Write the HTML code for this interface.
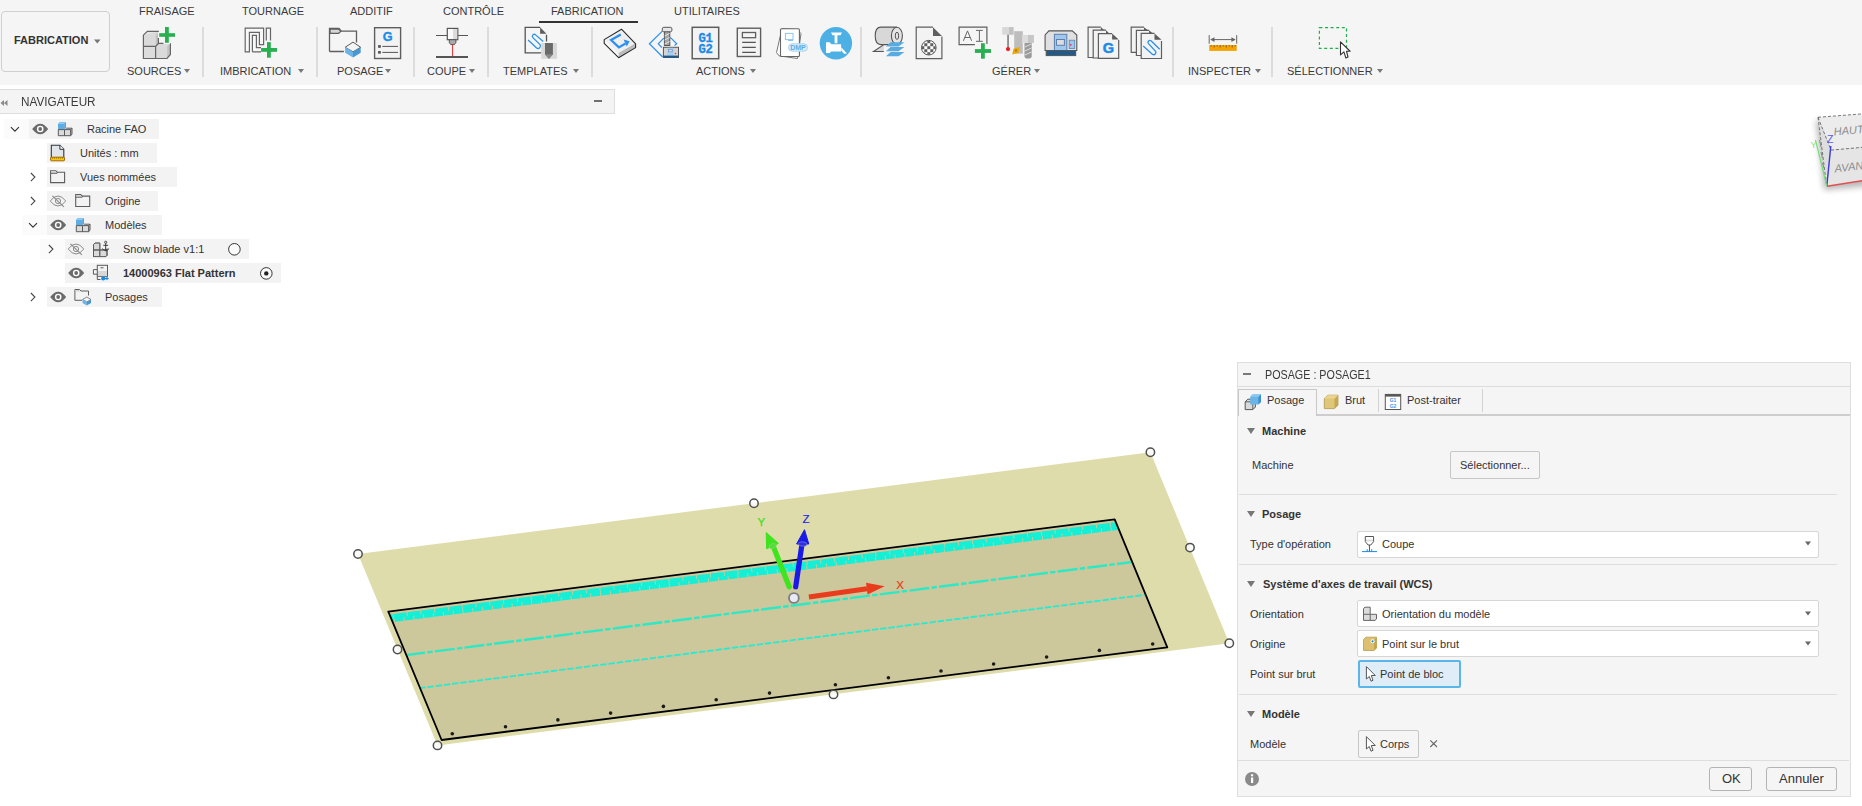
<!DOCTYPE html>
<html><head><meta charset="utf-8">
<style>
*{box-sizing:border-box;margin:0;padding:0}
html,body{width:1862px;height:806px;overflow:hidden;background:#fff;font-family:"Liberation Sans",sans-serif;color:#3c3c3c}
.abs{position:absolute}
#tb{position:absolute;left:0;top:0;width:1862px;height:85px;background:#f5f5f5}
.tab{position:absolute;top:5px;font-size:11px;line-height:13px;color:#3a3a3a;white-space:nowrap}
.grp{position:absolute;top:65px;font-size:11px;line-height:13px;color:#3a3a3a;white-space:nowrap}
.sep{position:absolute;top:27px;width:2px;height:50px;background:#dcdcdc}
.arr{display:inline-block;width:0;height:0;border-left:3px solid transparent;border-right:3px solid transparent;border-top:4px solid #777;vertical-align:2px}
.ic{position:absolute}
#nav{position:absolute;left:0;top:89px;width:615px;height:25px;background:#f4f4f4;border:1px solid #dedede;border-left:none}
.row{position:absolute;height:20px;background:#f3f3f3}
.rt{position:absolute;font-size:11px;line-height:13px;color:#333;white-space:nowrap}
#dlg{position:absolute;left:1237px;top:362px;width:614px;height:435px;background:#f5f5f5}
#dlgb{position:absolute;left:0;top:0;width:614px;height:435px;border:1px solid #dedede}
.lbl{position:absolute;font-size:11px;line-height:13px;color:#333;white-space:nowrap}
.hdr{position:absolute;font-size:11px;line-height:13px;font-weight:bold;color:#333;white-space:nowrap}
.tri{position:absolute;width:0;height:0;border-left:4.5px solid transparent;border-right:4.5px solid transparent;border-top:6px solid #777}
.hl{position:absolute;height:1px;background:#dedede}
.sel{position:absolute;background:#fff;border:1px solid #d6d6d6;border-radius:2px}
.btn{position:absolute;border:1px solid #c6c6c6;border-radius:2px;background:#f5f5f5}
</style></head><body>

<!-- TOOLBAR -->
<div id="tb">
  <div class="abs" style="left:1px;top:11px;width:109px;height:61px;border:1px solid #cfcfcf;border-radius:4px"></div>
  <div class="abs" style="left:14px;top:34px;font-size:11px;line-height:13px;font-weight:bold;color:#333">FABRICATION</div>
  
  <div class="tab" style="left:139px">FRAISAGE</div>
  <div class="tab" style="left:242px">TOURNAGE</div>
  <div class="tab" style="left:350px">ADDITIF</div>
  <div class="tab" style="left:443px">CONTRÔLE</div>
  <div class="tab" style="left:551px">FABRICATION</div>
  <div class="abs" style="left:539px;top:21px;width:99px;height:2px;background:#333"></div>
  <div class="tab" style="left:674px">UTILITAIRES</div>

  <div class="grp" style="left:127px">SOURCES<span class="arr" style="margin-left:3px"></span></div>
  <div class="sep" style="left:202px"></div>
  <div class="grp" style="left:220px">IMBRICATION <span class="arr" style="margin-left:4px"></span></div>
  <div class="sep" style="left:316px"></div>
  <div class="grp" style="left:337px">POSAGE<span class="arr" style="margin-left:2px"></span></div>
  <div class="sep" style="left:413px"></div>
  <div class="grp" style="left:427px">COUPE<span class="arr" style="margin-left:3px"></span></div>
  <div class="sep" style="left:487px"></div>
  <div class="grp" style="left:503px">TEMPLATES <span class="arr" style="margin-left:2px"></span></div>
  <div class="sep" style="left:591px"></div>
  <div class="grp" style="left:696px">ACTIONS <span class="arr" style="margin-left:2px"></span></div>
  <div class="sep" style="left:860px"></div>
  <div class="grp" style="left:992px">GÉRER<span class="arr" style="margin-left:3px"></span></div>
  <div class="sep" style="left:1172px"></div>
  <div class="grp" style="left:1188px">INSPECTER<span class="arr" style="margin-left:4px"></span></div>
  <div class="sep" style="left:1271px"></div>
  <div class="grp" style="left:1287px">SÉLECTIONNER<span class="arr" style="margin-left:4px"></span></div>
  <svg class="abs" style="left:0;top:0" width="1862" height="85" viewBox="0 0 1862 85">
 <!-- Fabrication dropdown arrow -->
 <path d="M94,39.5 H100.5 L97.25,43.5 Z" fill="#777"/>
 <!-- SOURCES -->
 <path d="M143.4,35.2 L147.3,31.3 H158.8 V43.4 L155.6,46.4 H143.4 Z" fill="#dadada"/>
 <path d="M155.6,46.4 L158.4,43.4 H170.4 V54.5 L167,58.5 H155.6 Z" fill="#dadada"/>
 <path d="M143.4,46.4 H155.6 V58.5 H143.4 Z" fill="#dcdcdc"/>
 <path d="M155.8,35 L158.6,32 V43.4 L155.8,46.4 Z" fill="#c2c2c2"/>
 <path d="M167.2,46.5 L170.2,43.5 V54.5 L167.2,58.3 Z" fill="#c2c2c2"/>
 <path d="M143.4,35.2 L147.3,31.3 H158.8" fill="#e6e6e6"/>
 <g stroke="#666" stroke-width="1.2" fill="none">
  <path d="M158.8,31.3 H147.3 L143.4,35.2 V58.5 H167 L170.4,54.5 V43.2"/>
  <path d="M158.4,37.5 V43.4 L155.6,46.4 H143.4 M155.6,46.4 V58.5 M158.4,43.4 H163.5"/>
 </g>
 <path d="M159.2,33.2 H175 V36.8 H159.2 Z M165,27 H168.8 V42.8 H165 Z" fill="none" stroke="#f4f4f4" stroke-width="2.4"/>
 <rect x="159.2" y="33.2" width="15.8" height="3.6" fill="#27b04f"/>
 <rect x="165" y="27" width="3.8" height="15.8" fill="#27b04f"/>
 <!-- IMBRICATION -->
 <g stroke="#666" stroke-width="1.2" fill="#f8f8f8">
  <path d="M245.2,51.8 V28.2 H263.6 V44.6 H259.4 V32.4 H249.4 V51.8 Z"/>
  <path d="M252.4,51.8 V35.4 H256.4 V47.6 H261 M261,51.8 H252.4"/>
  <path d="M266.3,40.6 V28.2 H270.5 V40.6"/>
 </g>
 <rect x="261.1" y="48" width="15.9" height="3.8" fill="#27b04f"/>
 <rect x="267" y="42.1" width="3.8" height="15.6" fill="#27b04f"/>
 <!-- POSAGE folder -->
 <path d="M329.5,51.5 V28.5 H338.9 L341.4,31.2 H356.5 V42.6 M343.9,51.5 H329.5" stroke="#5e5e5e" stroke-width="1.3" fill="none"/>
 <path d="M330.1,29.1 H338.6 L340.9,31.2 L338.6,33.4 H330.1 Z" fill="#d6d6d6" stroke="#5e5e5e" stroke-width="1.2"/>
 <path d="M345.1,47.3 L353,42.1 L360.7,47.3 L353,51.8 Z" fill="#f4f4f4" stroke="#5a5a5a" stroke-width="1"/>
 <path d="M345.1,47.3 L353,51.8 V57.5 L345.1,52.8 Z" fill="#6ab4e8"/>
 <path d="M360.7,47.3 L353,51.8 V57.5 L360.7,52.8 Z" fill="#4a98d2"/>
 <!-- G doc -->
 <rect x="374.6" y="27.7" width="26" height="30.8" fill="#f3f3f3" stroke="#5e5e5e" stroke-width="1.4"/>
 <text x="387.6" y="40.9" text-anchor="middle" font-family="Liberation Sans" font-weight="bold" font-size="12.6" fill="#1c8ae6" stroke="#1c8ae6" stroke-width=".35">G</text>
 <rect x="378.1" y="45.1" width="2.7" height="2.7" fill="#555"/>
 <rect x="378.1" y="51" width="2.7" height="2.7" fill="#555"/>
 <path d="M382.3,46.4 H398 M382.3,52.4 H398" stroke="#555" stroke-width="1"/>
 <!-- COUPE -->
 <path d="M436,35.5 H447.3 M457.8,35.5 H468" stroke="#555" stroke-width="1"/>
 <rect x="447.3" y="28.4" width="10.5" height="11.3" fill="#fafafa" stroke="#555" stroke-width="1.2"/>
 <rect x="453" y="29" width="4.2" height="10.1" fill="#dcdcdc"/>
 <path d="M449.3,39.7 V42.5 L450.8,44.6 H454.4 L455.9,42.5 V39.7 Z" fill="#aaa" stroke="#555" stroke-width="1"/>
 <path d="M452.6,44.6 V56.2" stroke="#e03030" stroke-width="1"/>
 <rect x="436" y="56" width="32" height="2" fill="#555"/>
 <!-- TEMPLATES -->
 <path d="M540.1,27.3 H525.2 V52.8 H541.3 M546.5,34.8 V41.5" stroke="#555" stroke-width="1.3" fill="none"/>
 <path d="M540.1,27.3 L546.5,33.7 H540.1 Z" fill="#5e5e5e"/>
 <path d="M528.1,40 L536.6,47.9 A2.4,2.4 0 0 0 540,44.6 L532.9,37.6 A1.9,1.9 0 0 1 535.6,34.9 L543.2,41.6" stroke="#2a90e8" stroke-width="1.3" fill="none"/>
 <rect x="541.3" y="43" width="15.7" height="15.8" fill="#d8d8d8"/>
 <path d="M545,43 H552.9 V54.3 L548.95,58.8 L545,54.3 Z" fill="#6a6a6a"/>
 <path d="M545,54.3 H552.9 L548.95,58.8 Z" fill="#888"/>
 <!-- ACTIONS 1 slab -->
 <path d="M604.2,39.6 L618.6,53.5 V57.7 L604.2,43.3 Z" fill="#fafafa"/>
 <path d="M618.6,53.5 L635.6,43.8 V47.6 L618.6,57.7 Z" fill="#bdbdbd"/>
 <path d="M604.2,39.6 L621.5,29.2 L635.6,43.8 L618.6,53.5 Z" fill="#efefef"/>
 <path d="M618.6,53.5 L635.6,43.8" stroke="#9a9a9a" stroke-width=".6"/>
 <path d="M604.2,39.6 L621.5,29.2 L635.6,43.8 V47.6 L618.6,57.7 L604.2,43.3 Z" fill="none" stroke="#2a2a2a" stroke-width="1.1" stroke-linejoin="round"/>
 <path d="M620.8,34.4 L611.1,40 L618.9,47.4 L625.5,43.6" fill="none" stroke="#2d8ff0" stroke-width="2.3"/>
 <path d="M623.6,39.6 L629.6,41.2 L626.8,46.4 Z" fill="#2d8ff0"/>
 <!-- ACTIONS 2 -->
 <path d="M662.3,31.1 L649.4,43.8 L662.7,57 M663.7,38.2 L658.3,43.8 L661.8,47.5 M670.3,37.4 L676.7,43.8 L674.5,45.5" fill="none" stroke="#2d8ff0" stroke-width="1.2"/>
 <rect x="664.4" y="31.5" width="5.4" height="14" fill="#a6a6a6" stroke="#555" stroke-width="1"/>
 <path d="M664.6,36 L669.6,33.5 M664.6,40 L669.6,37.5 M664.6,44 L669.6,41.5" stroke="#e0e0e0" stroke-width="1"/>
 <rect x="662.3" y="27.3" width="9.6" height="4.5" rx="1.5" fill="#e6e6e6" stroke="#555" stroke-width="1"/>
 <rect x="663.4" y="47.3" width="15.1" height="10.2" fill="#d4d4d4" stroke="#555" stroke-width="1"/>
 <rect x="667.5" y="47.8" width="6.1" height="8.4" fill="#a8cff0"/>
 <rect x="668.6" y="49.5" width="3.6" height="2.3" fill="#ddd" stroke="#6a8fc0" stroke-width=".6"/>
 <rect x="663.4" y="55.6" width="15.1" height="1.9" fill="#1b5a8a"/>
 <circle cx="675.5" cy="53.5" r=".8" fill="#e0306a"/>
 <!-- G1G2 -->
 <rect x="692.2" y="27.3" width="26.5" height="31.4" fill="#f3f3f3" stroke="#5e5e5e" stroke-width="1.5"/>
 <text x="705.6" y="41.9" text-anchor="middle" font-family="Liberation Mono" font-weight="bold" font-size="12.2" letter-spacing="-0.2" fill="#1c8ae6" stroke="#1c8ae6" stroke-width=".3">G1</text>
 <text x="705.6" y="52.8" text-anchor="middle" font-family="Liberation Mono" font-weight="bold" font-size="12.2" letter-spacing="-0.2" fill="#1c8ae6" stroke="#1c8ae6" stroke-width=".3">G2</text>
 <!-- doc lines -->
 <rect x="737.3" y="28.2" width="23.3" height="28.3" fill="#f3f3f3" stroke="#5e5e5e" stroke-width="1.4"/>
 <rect x="742.4" y="32.5" width="13.2" height="5.2" fill="#f3f3f3" stroke="#5e5e5e" stroke-width="1.3"/>
 <path d="M742.2,42.4 H755.8 M742.2,47.4 H755.8 M742.2,52.4 H755.8" stroke="#555" stroke-width="1.1"/>
 <!-- DMP -->
 <path d="M782,28.5 L797,29.5 L801,33.5 L797.5,58.5 L779,55.8 L776.5,52.5 Z" fill="#fff" stroke="#777" stroke-width="1"/>
 <rect x="780.5" y="28.7" width="18.9" height="27.8" rx="1" fill="#fff" stroke="#666" stroke-width="1.1"/>
 <rect x="785.4" y="33.4" width="7.6" height="6.2" fill="none" stroke="#8cc4f0" stroke-width="1"/>
 <path d="M788,40.5 H793" stroke="#8cc4f0" stroke-width="1"/>
 <rect x="788.5" y="43.8" width="19" height="7.4" rx="3.7" fill="#dcecf8" stroke="#a8d4f4" stroke-width="1"/>
 <text x="798" y="50.2" text-anchor="middle" font-family="Liberation Sans" font-weight="bold" font-size="7" fill="#5aaae6">DMP</text>
 <!-- blue circle -->
 <circle cx="835.9" cy="43.2" r="16.2" fill="#4db0e4"/>
 <path d="M831,32.5 H842 L840.5,35.3 H837.4 V43.2 H834.6 V35.3 H832.5 Z" fill="#fff"/>
 <path d="M826,42.2 H829.5 L831.5,44.3 H841.1 V51.4 H831.5 L829.5,53 H826 Z" fill="#fff"/>
 <path d="M841.3,47.3 L847,53.5 L844,53.8 L841.3,50.5 Z" fill="#fff"/>
 <!-- GERER roll -->
 <path d="M896.9,27.1 H881 Q875.2,27.1 875.2,35.8 Q875.2,44.6 881,44.6 H896.9" fill="#d8d8d8" stroke="#555" stroke-width="1.1"/>
 <ellipse cx="896.9" cy="35.8" rx="5.5" ry="8.6" fill="#e4e4e4" stroke="#555" stroke-width="1.1"/>
 <ellipse cx="897" cy="35.8" rx="1.7" ry="3.6" fill="none" stroke="#555" stroke-width="1"/>
 <path d="M883.8,44.6 L873.5,51.5 H883.8" fill="#d8d8d8" stroke="#555" stroke-width="1.1"/>
 <path d="M885.9,46.4 L890.6,42.2 H904.4 L898.6,46.4 Z M885.9,51.3 L890.6,47.1 H904.4 L898.6,51.3 Z M885.9,56.3 L890.6,52.1 H904.4 L898.6,56.3 Z" fill="#5aaae0"/>
 <!-- doc checker -->
 <path d="M933,27.2 H916.2 V58.6 H941.9 V36.5" fill="#f3f3f3" stroke="#5e5e5e" stroke-width="1.2"/>
 <path d="M933,27.3 L941.9,36 H933 Z" fill="#5e5e5e"/>
 <defs><clipPath id="chk"><circle cx="928.8" cy="47.7" r="7"/></clipPath></defs>
 <circle cx="928.8" cy="47.7" r="7.3" fill="#fff"/>
 <g fill="#606060" clip-path="url(#chk)"><rect x="921.3" y="40.2" width="3" height="3"/><rect x="921.3" y="46.2" width="3" height="3"/><rect x="921.3" y="52.2" width="3" height="3"/><rect x="924.3" y="43.2" width="3" height="3"/><rect x="924.3" y="49.2" width="3" height="3"/><rect x="927.3" y="40.2" width="3" height="3"/><rect x="927.3" y="46.2" width="3" height="3"/><rect x="927.3" y="52.2" width="3" height="3"/><rect x="930.3" y="43.2" width="3" height="3"/><rect x="930.3" y="49.2" width="3" height="3"/><rect x="933.3" y="40.2" width="3" height="3"/><rect x="933.3" y="46.2" width="3" height="3"/><rect x="933.3" y="52.2" width="3" height="3"/></g>
 <circle cx="928.8" cy="47.7" r="7.3" fill="none" stroke="#555" stroke-width="1"/>
 <!-- A I + -->
 <path d="M974.9,44.6 H959.1 V27.1 H986.9 V44" fill="none" stroke="#5e5e5e" stroke-width="1.2"/>
 <path d="M963.4,40.8 L967.5,30.9 L971.6,40.8 M964.8,37.5 H970.2" fill="none" stroke="#666" stroke-width="1"/>
 <path d="M976,30.4 H982.8 M976,41.3 H982.8 M979.4,30.4 V41.3" fill="none" stroke="#666" stroke-width="1"/>
 <rect x="974.9" y="49.1" width="16.1" height="3.8" fill="#27b04f"/>
 <rect x="981" y="43.2" width="3.8" height="15.5" fill="#27b04f"/>
 <!-- tools -->
 <rect x="1002.2" y="27.1" width="11.3" height="7.6" fill="#d8d8d8"/>
 <rect x="1009" y="27.1" width="4.5" height="7.6" fill="#c2c2c2"/>
 <rect x="1007.3" y="34.7" width="1.5" height="13" fill="#777"/>
 <circle cx="1008" cy="49.1" r="2.1" fill="#ee1c24"/>
 <rect x="1014.2" y="31.2" width="8.6" height="22.4" fill="#bdbdbd"/>
 <path d="M1012.2,54.6 L1013.5,48.7 L1019.7,47 L1018.7,52.9 Z" fill="#f0a800"/>
 <rect x="1015" y="49.5" width="2" height="2" fill="#9a7a30"/>
 <rect x="1022.1" y="35" width="11.7" height="7.9" fill="#dcdcdc"/>
 <rect x="1028" y="35" width="5.8" height="7.9" fill="#c6c6c6"/>
 <path d="M1024.5,42.9 H1031.7 V57 L1030,58.4 H1026 L1024.5,57 Z" fill="#9a9a9a"/>
 <path d="M1024.8,47 L1031.4,44 M1024.8,51 L1031.4,48 M1024.8,55 L1031.4,52" stroke="#e0e0e0" stroke-width="1"/>
 <!-- machine -->
 <path d="M1045.1,50.5 V35 L1048.9,30.9 H1072.3 L1076.8,35 V50.5 Z" fill="#e0e0e0" stroke="#555" stroke-width="1.1"/>
 <rect x="1054.4" y="34.3" width="12.4" height="16.2" fill="#a0c8ec" stroke="#5a80b0" stroke-width="1"/>
 <rect x="1056.5" y="39.5" width="7.9" height="5.8" fill="#dcdcdc" stroke="#5a80b0" stroke-width="1"/>
 <rect x="1069.2" y="40.2" width="5.5" height="8.2" fill="#a0c8ec" stroke="#5a80b0" stroke-width=".8"/>
 <circle cx="1070.8" cy="44.8" r=".9" fill="#e0306a"/>
 <rect x="1046.2" y="50.5" width="29.5" height="5.1" fill="#1e5a8c" stroke="#555" stroke-width="1"/>
 <!-- docs G -->
 <path d="M1095,57.5 H1088.1 V27.1 H1100.8" fill="#f3f3f3" stroke="#5e5e5e" stroke-width="1.2"/>
 <path d="M1100.8,27.1 L1104.5,30.5 H1100.8 Z" fill="#5e5e5e"/>
 <path d="M1098.4,58 H1093.2 V30.2 H1106" fill="#f3f3f3" stroke="#5e5e5e" stroke-width="1.2"/>
 <path d="M1106,30.2 L1109.5,33.6 H1106 Z" fill="#5e5e5e"/>
 <path d="M1112.1,33.6 H1098.4 V58.4 H1118.7 V40" fill="#f3f3f3" stroke="#5e5e5e" stroke-width="1.2"/>
 <path d="M1112.1,33.6 L1118.7,39.5 H1112.1 Z" fill="#5e5e5e"/>
 <text x="1108.4" y="52.9" text-anchor="middle" font-family="Liberation Sans" font-weight="bold" font-size="14.5" fill="#1c8ae6" stroke="#1c8ae6" stroke-width=".5">G</text>
 <!-- docs clip -->
 <path d="M1136.4,52.3 H1131.2 V27.2 H1144" fill="#f3f3f3" stroke="#5e5e5e" stroke-width="1.2"/>
 <path d="M1144,27.2 L1148,30.3 H1144 Z" fill="#5e5e5e"/>
 <path d="M1141.2,55.5 H1136.4 V30.3 H1149" fill="#f3f3f3" stroke="#5e5e5e" stroke-width="1.2"/>
 <path d="M1149,30.3 L1153,33.4 H1149 Z" fill="#5e5e5e"/>
 <path d="M1154.5,33.4 H1141.2 V58.5 H1161.5 V41" fill="#f3f3f3" stroke="#5e5e5e" stroke-width="1.2"/>
 <path d="M1154.5,33.4 L1161.5,39.8 H1154.5 Z" fill="#5e5e5e"/>
 <path d="M1143.2,46.1 L1152.6,54.4 A2.2,2.2 0 0 0 1155.6,51.4 L1148.3,43.4 A1.9,1.9 0 0 1 1151,40.8 L1159.7,49.2" stroke="#2a90e8" stroke-width="1.3" fill="none"/>
 <!-- ruler -->
 <path d="M1209.2,35.1 V43.7 M1236.7,35.1 V43.7 M1211,39.6 H1235" stroke="#666" stroke-width="1"/>
 <path d="M1210.2,39.6 L1214.5,37.2 V42 Z M1235.7,39.6 L1231.4,37.2 V42 Z" fill="#666"/>
 <rect x="1209.2" y="45.1" width="27.5" height="5.8" fill="#f5a300"/>
 <path d="M1211.2,45.1 V46.5 M1214.2,45.1 V47.5 M1217.2,45.1 V46.5 M1220.2,45.1 V47.5 M1223.2,45.1 V46.5 M1226.2,45.1 V47.5 M1229.2,45.1 V46.5 M1232.2,45.1 V47.5 M1235.2,45.1 V46.5" stroke="#6a5020" stroke-width=".8"/>
 <!-- select -->
 <rect x="1319.4" y="27.6" width="27.1" height="20.8" fill="none" stroke="#1db04a" stroke-width="1.2" stroke-dasharray="3 2.6"/>
 <path d="M1340.5,41.9 V54.9 L1343.9,51.8 L1345.9,58 L1348,57 L1346.5,51.25 H1350.1 Z" fill="#fff" stroke="#333" stroke-width="1.1" stroke-linejoin="round"/>
</svg>

</div>

<!-- NAVIGATOR -->
<div id="nav">
  <div class="abs" style="left:21px;top:5px;font-size:12.3px;line-height:14px;color:#3a3a3a;transform:scaleX(0.955);transform-origin:0 0">NAVIGATEUR</div>
  <svg class="abs" style="left:0;top:9px" width="10" height="8"><path d="M0.5,4 L4,1 V7 Z M4,4 L7.5,1 V7 Z" fill="#8a8a8a"/></svg>
  <div class="abs" style="left:594px;top:10px;width:8px;height:2px;background:#707070"></div>
</div>
<!--TREE-->
<div class="abs" style="left:4px;top:119px;width:25px;height:20px;background:#fbfbfb"></div>
<div class="row" style="left:29px;top:119px;width:130px"></div>
<div class="row" style="left:47px;top:143px;width:110px"></div>
<div class="row" style="left:47px;top:167px;width:130px"></div>
<div class="row" style="left:47px;top:191px;width:111px"></div>
<div class="abs" style="left:22px;top:215px;width:25px;height:20px;background:#fbfbfb"></div>
<div class="row" style="left:47px;top:215px;width:115px"></div>
<div class="abs" style="left:40px;top:239px;width:25px;height:20px;background:#fbfbfb"></div>
<div class="row" style="left:65px;top:239px;width:184px"></div>
<div class="row" style="left:65px;top:263px;width:216px"></div>
<div class="row" style="left:47px;top:287px;width:115px"></div>
<div class="rt" style="left:87px;top:123px">Racine FAO</div>
<div class="rt" style="left:80px;top:147px">Unités : mm</div>
<div class="rt" style="left:80px;top:171px">Vues nommées</div>
<div class="rt" style="left:105px;top:195px">Origine</div>
<div class="rt" style="left:105px;top:219px">Modèles</div>
<div class="rt" style="left:123px;top:243px">Snow blade v1:1</div>
<div class="rt" style="left:123px;top:267px;font-weight:bold">14000963 Flat Pattern</div>
<div class="rt" style="left:105px;top:291px">Posages</div>
<svg class="abs" style="left:0;top:0" width="300" height="320" viewBox="0 0 300 320">
 
 <g transform="translate(10.9 127.1)"><path d="M0,0 L4,4 L8,0" fill="none" stroke="#333" stroke-width="1.1"/></g>
 <g transform="translate(40.2 129)"><path d="M-8,0 Q0,-10.5 8,0 Q0,10.5 -8,0 Z" fill="#6b6b6b"/><circle r="3.3" fill="#fff"/><circle r="1.9" fill="#6b6b6b"/></g>
 <g transform="translate(58 122.1)"><path d="M0.3,13.6 V7.5 H12.6 V13.6 Z" fill="#dadada"/><path d="M12.6,7.5 L14,6 V12.2 L12.6,13.6 Z" fill="#c4c4c4"/><path d="M7,7.5 L8.2,6.1 H14 L12.6,7.5 Z" fill="#e8e8e8"/><path d="M0,1.6 H6.5 V7.5 H0 Z" fill="#5caee4"/><path d="M0,1.6 L1.5,0 H7.8 L6.5,1.6 Z" fill="#80c4f0"/><path d="M6.5,1.6 L7.8,0 V5.9 L6.5,7.5 Z" fill="#3a8ad0"/><path d="M0.3,7.5 V13.6 H12.6 L14,12.2 V6.1 H8.2 M0.3,7.5 H6.5 V13.6 M6.5,7.5 H12.6 V13.6 M12.6,7.5 L14,6.1" fill="none" stroke="#5a5a5a" stroke-width="1"/></g>
 <!-- units doc -->
 <path d="M51.3,157.6 V145.3 H59.9 L63.8,149.3 V157.6" fill="#e2e5ea" stroke="#2d3440" stroke-width="1.1"/>
 <path d="M59.9,145.3 V149.3 H63.8" fill="#fff" stroke="#2d3440" stroke-width="1"/>
 <rect x="50.6" y="157.2" width="13.9" height="3.6" rx="0.8" fill="#f5c800" stroke="#a86400" stroke-width="1"/><path d="M52.5,157.5 V158.6 M54.5,157.5 V158.6 M56.5,157.5 V158.6 M58.5,157.5 V158.6 M60.5,157.5 V158.6 M62.5,157.5 V158.6" stroke="#7a5a10" stroke-width=".7"/>
 <g transform="translate(30.9 173)"><path d="M0,0 L4,4.05 L0,8.1" fill="none" stroke="#444" stroke-width="1.1"/></g>
 <g transform="translate(50.1 170.2)"><path d="M0.5,12.4 V0.5 H5.6 L7.2,2 H14.5 V12.4 Z" fill="#f3f3f3" stroke="#5e5e5e" stroke-width="1.1"/><path d="M1,1 H5.4 L6.6,2.5 H1 Z" fill="#d4d4d4"/><path d="M0.5,3.1 H7 L7.5,2" fill="none" stroke="#5e5e5e" stroke-width="1"/></g>
 <g transform="translate(30.9 197)"><path d="M0,0 L4,4.05 L0,8.1" fill="none" stroke="#444" stroke-width="1.1"/></g>
 <g transform="translate(58 201)"><path d="M-7.8,0 Q0,-10 7.8,0 Q0,10 -7.8,0 Z" fill="none" stroke="#8a8a8a" stroke-width="1"/><circle r="2.6" fill="none" stroke="#8a8a8a" stroke-width="1"/><path d="M-5.6,-5.2 L5.9,5.9" stroke="#8a8a8a" stroke-width="1.1"/></g>
 <g transform="translate(75.2 194.1)"><path d="M0.5,12.4 V0.5 H5.6 L7.2,2 H14.5 V12.4 Z" fill="#f3f3f3" stroke="#5e5e5e" stroke-width="1.1"/><path d="M1,1 H5.4 L6.6,2.5 H1 Z" fill="#d4d4d4"/><path d="M0.5,3.1 H7 L7.5,2" fill="none" stroke="#5e5e5e" stroke-width="1"/></g>
 <g transform="translate(29 223.2)"><path d="M0,0 L4,4 L8,0" fill="none" stroke="#333" stroke-width="1.1"/></g>
 <g transform="translate(58.2 225)"><path d="M-8,0 Q0,-10.5 8,0 Q0,10.5 -8,0 Z" fill="#6b6b6b"/><circle r="3.3" fill="#fff"/><circle r="1.9" fill="#6b6b6b"/></g>
 <g transform="translate(76 218.1)"><path d="M0.3,13.6 V7.5 H12.6 V13.6 Z" fill="#dadada"/><path d="M12.6,7.5 L14,6 V12.2 L12.6,13.6 Z" fill="#c4c4c4"/><path d="M7,7.5 L8.2,6.1 H14 L12.6,7.5 Z" fill="#e8e8e8"/><path d="M0,1.6 H6.5 V7.5 H0 Z" fill="#5caee4"/><path d="M0,1.6 L1.5,0 H7.8 L6.5,1.6 Z" fill="#80c4f0"/><path d="M6.5,1.6 L7.8,0 V5.9 L6.5,7.5 Z" fill="#3a8ad0"/><path d="M0.3,7.5 V13.6 H12.6 L14,12.2 V6.1 H8.2 M0.3,7.5 H6.5 V13.6 M6.5,7.5 H12.6 V13.6 M12.6,7.5 L14,6.1" fill="none" stroke="#5a5a5a" stroke-width="1"/></g>
 <g transform="translate(48.9 245)"><path d="M0,0 L4,4.05 L0,8.1" fill="none" stroke="#444" stroke-width="1.1"/></g>
 <g transform="translate(76 249)"><path d="M-7.8,0 Q0,-10 7.8,0 Q0,10 -7.8,0 Z" fill="none" stroke="#8a8a8a" stroke-width="1"/><circle r="2.6" fill="none" stroke="#8a8a8a" stroke-width="1"/><path d="M-5.6,-5.2 L5.9,5.9" stroke="#8a8a8a" stroke-width="1.1"/></g>
 <!-- snow blade icon -->
 <path d="M93.5,256.6 V244.5 L95,243.1 H99.8 V250 M93.5,250 H105.8 L107,248.8 V255.4 L105.8,256.6 Z M99.8,250 V256.6" fill="#d8d8d8" stroke="#5a5a5a" stroke-width="1"/>
 <path d="M93.5,256.6 V244.5 L95,243.1 H99.8 V250 H93.5 Z" fill="#d8d8d8" stroke="#5a5a5a" stroke-width="1"/>
 <path d="M94,250.5 H99.3 V256.1 H94 Z M100.3,250.5 H105.5 V256.1 H100.3 Z" fill="#dadada"/>
 <path d="M93.5,250 H105.8 M99.8,250 V256.6 M93.5,256.6 H105.8 L107,255.4 V248.8" fill="none" stroke="#5a5a5a" stroke-width="1"/>
 <path d="M105.7,243.3 V251.2 M103.3,245.3 H108.1 M102.3,248.6 Q105.7,252.4 109.1,248.6" fill="none" stroke="#3a3a3a" stroke-width="1"/>
 <circle cx="105.7" cy="242.3" r="1.1" fill="none" stroke="#3a3a3a" stroke-width=".9"/>
 <circle cx="234.4" cy="249.3" r="5.8" fill="#fafafa" stroke="#333" stroke-width="1"/>
 <g transform="translate(76.2 273)"><path d="M-8,0 Q0,-10.5 8,0 Q0,10.5 -8,0 Z" fill="#6b6b6b"/><circle r="3.3" fill="#fff"/><circle r="1.9" fill="#6b6b6b"/></g>
 <!-- flat pattern icon -->
 <rect x="97.3" y="265.3" width="10.2" height="11" fill="#f3f3f3" stroke="#5a5a5a" stroke-width="1"/>
 <rect x="98" y="271" width="9" height="4.8" fill="#d8d8d8"/>
 <path d="M100.5,267.8 H103.5" stroke="#5a5a5a" stroke-width="1"/>
 <path d="M97.3,269.6 H93.4 V274.2 H97.3 M97.3,276.3 V279.5 H100.5" fill="none" stroke="#5a5a5a" stroke-width="1"/>
 <circle cx="103.2" cy="278.5" r="2.1" fill="#1a8ae6"/><path d="M103.5,278.5 H107.5" stroke="#1a8ae6" stroke-width="1.5"/><path d="M106.5,276.8 L109,278.5 L106.5,280.2 Z" fill="#1a8ae6"/>
 <circle cx="266.3" cy="273.4" r="5.8" fill="#fafafa" stroke="#333" stroke-width="1"/>
 <circle cx="266.3" cy="273.4" r="2.2" fill="#222"/>
 <g transform="translate(30.9 293)"><path d="M0,0 L4,4.05 L0,8.1" fill="none" stroke="#444" stroke-width="1.1"/></g>
 <g transform="translate(58.2 297)"><path d="M-8,0 Q0,-10.5 8,0 Q0,10.5 -8,0 Z" fill="#6b6b6b"/><circle r="3.3" fill="#fff"/><circle r="1.9" fill="#6b6b6b"/></g>
 <!-- posages icon -->
 <path d="M74.9,300.3 V289.5 H79.5 L81,291 H88.5 V295.5 M74.9,300.3 H82" fill="none" stroke="#5e5e5e" stroke-width="1"/>
 <path d="M75.4,290 H79.3 L80.3,291.6 H75.4 Z" fill="#d4d4d4"/>
 <path d="M82.5,299.5 L86.8,297 L91,299.5 L86.8,302 Z" fill="#f3f3f3" stroke="#5a5a5a" stroke-width=".7"/>
 <path d="M82.5,299.5 L86.8,302 V305.5 L82.5,303 Z" fill="#6ab4e8"/>
 <path d="M91,299.5 L86.8,302 V305.5 L91,303 Z" fill="#4a98d2"/>
</svg>


<!-- VIEWPORT -->
<!--VIEW-->
<svg class="abs" style="left:0;top:0" width="1862" height="806" viewBox="0 0 1862 806">
 <defs>
  <clipPath id="partclip"><path d="M388.3,611.6 L1114.7,519.3 L1167.3,647.3 L441.6,740 Z"/></clipPath>
  <filter id="blur3" x="-50%" y="-50%" width="200%" height="200%"><feGaussianBlur stdDeviation="3"/></filter>
 </defs>
 <!-- stock -->
 <path d="M358,554 L1150.4,452.3 L1229.3,643.3 L437.5,745.4 Z" fill="#dfdcab"/>
 <!-- part -->
 <path d="M388.3,611.6 L1114.7,519.3 L1167.3,647.3 L441.6,740 Z" fill="#cdc79c"/>
 <g clip-path="url(#partclip)">
  <path d="M380,617.8 L1130,522.5" stroke="#14efd5" stroke-width="4.3" stroke-dasharray="13 0.9"/>
  <path d="M380,621.6 L1130,526.3" stroke="#14efd5" stroke-width="4.1" stroke-dasharray="9 0.9" stroke-dashoffset="5"/>
  <path d="M405.2,655.2 L1140,561" stroke="#2ee8c4" stroke-width="2.4" stroke-dasharray="20 2.2 5.5 2.2"/>
  <path d="M419.1,688.2 L1150,594.2" stroke="#28ead0" stroke-width="1.8" stroke-dasharray="6.5 1.8"/>
 </g>
 <path d="M388.3,611.6 L1114.7,519.3 L1167.3,647.3 L441.6,740 Z" fill="none" stroke="#000" stroke-width="1.8" stroke-linejoin="round"/>
 <!-- holes -->
 <g fill="#1a1a1a">
  <circle cx="452.3" cy="733.7" r="1.8"/><circle cx="505.5" cy="726.7" r="1.8"/><circle cx="557.9" cy="719.9" r="1.8"/>
  <circle cx="610.6" cy="713.1" r="1.8"/><circle cx="663.4" cy="706.4" r="1.8"/><circle cx="716.2" cy="699.7" r="1.8"/>
  <circle cx="769.5" cy="693.1" r="1.8"/><circle cx="835.4" cy="684.7" r="1.8"/><circle cx="888.4" cy="677.8" r="1.8"/>
  <circle cx="941" cy="671" r="1.8"/><circle cx="993.6" cy="664" r="1.8"/><circle cx="1046.6" cy="657" r="1.8"/>
  <circle cx="1099.4" cy="650.4" r="1.8"/><circle cx="1152.7" cy="644" r="1.8"/>
 </g>
 <!-- handles -->
 <g fill="#fafafa" fill-opacity="0.85" stroke="#505050" stroke-width="1.5">
  <circle cx="358" cy="554" r="4.2"/><circle cx="754" cy="503.2" r="4.2"/><circle cx="1150.4" cy="452.3" r="4.2"/>
  <circle cx="1190" cy="547.6" r="4.2"/><circle cx="1229.3" cy="643.3" r="4.2"/><circle cx="833.5" cy="694.4" r="4.2"/>
  <circle cx="437.5" cy="745.4" r="4.2"/><circle cx="397.5" cy="649.5" r="4.2"/>
 </g>
 <!-- triad -->
 <path d="M789.2,586.8 L772.9,545.5" stroke="#3ee41c" stroke-width="5.2" stroke-linecap="round"/>
 <path d="M766.2,532.6 L766.6,548.8 L778.4,543.4 Z" fill="#3ee41c" stroke="#3ee41c" stroke-width="1" stroke-linejoin="round"/>
 <ellipse cx="772.6" cy="546" rx="3.6" ry="2.4" transform="rotate(-22 772.6 546)" fill="#55dd38" stroke="#7fd070" stroke-width=".8"/>
 <path d="M795.7,586.8 L802,544" stroke="#1a1ae6" stroke-width="5.2" stroke-linecap="round"/>
 <path d="M804.5,529.7 L796.6,544 L808.8,544 Z" fill="#1a1ae6" stroke="#1a1ae6" stroke-width="1" stroke-linejoin="round"/>
 <ellipse cx="802.6" cy="544" rx="4.2" ry="2.2" transform="rotate(5 802.6 544)" fill="#3030e0" stroke="#7070d8" stroke-width=".8"/>
 <path d="M808.9,596.9 L867,588.8" stroke="#e83c1c" stroke-width="5"/>
 <path d="M884.6,586.2 L866,582.8 L867.6,594.4 Z" fill="#e83c1c"/>
 <circle cx="793.9" cy="598" r="4.9" fill="#e8eaf6" stroke="#808080" stroke-width="1.9"/>
 <text x="757.4" y="525.8" font-family="Liberation Sans" font-size="11.5" fill="#38e018" stroke="#38e018" stroke-width=".25">Y</text>
 <text x="802.6" y="523.4" font-family="Liberation Sans" font-size="11.5" fill="#2222ee" stroke="#2222ee" stroke-width=".2">Z</text>
 <text x="896.3" y="588.8" font-family="Liberation Sans" font-size="11.5" fill="#e83c1c" stroke="#e83c1c" stroke-width=".2">X</text>
 <!-- view cube -->
 <path d="M1816,120 L1824,190 L1870,186 L1870,128 Z" fill="#000" opacity="0.28" filter="url(#blur3)"/>
 <path d="M1818,117.3 L1862,113.9 L1862,147.4 L1831,150.1 Z" fill="#ececec"/>
 <path d="M1831,150.1 L1862,147.4 L1862,180.5 L1827,186.3 Z" fill="#e5e5e5"/>
 <path d="M1818,117.3 L1831,150.1 L1827,186.3 L1826,186 Z" fill="#dedede"/>
 <path d="M1818,117.3 L1862,113.9 M1831,150.1 L1862,147.4 M1818,117.3 L1831,150.1 M1818,117.3 L1826.5,185" fill="none" stroke="#6a6a6a" stroke-width="0.9" stroke-dasharray="3 2"/>
 <path d="M1827,186.3 L1862,180.8" stroke="#e05050" stroke-width="1.6"/>
 <path d="M1830.8,146 L1826.8,186" stroke="#3a3ae0" stroke-width="1.4"/>
 <path d="M1815.5,140 L1826.8,186" stroke="#70e070" stroke-width="1.1"/>
 <path d="M1819.5,140 L1821,147 M1821,152 L1822.5,158 M1822.5,163 L1824,168" stroke="#888" stroke-width="1"/>
 <text x="1827" y="143" font-family="Liberation Sans" font-size="10.5" fill="#5a5ae8">Z</text>
 <text x="1810.5" y="148" font-family="Liberation Sans" font-size="9" fill="#8ae08a">Y</text>
 <text x="1834" y="135.5" font-family="Liberation Sans" font-style="italic" font-size="11" fill="#8c8c8c" transform="rotate(-5 1834 135)">HAUT</text>
 <text x="1835" y="172.5" font-family="Liberation Sans" font-style="italic" font-size="11" fill="#8c8c8c" transform="rotate(-7 1835 172)">AVAN</text>
</svg>


<!-- DIALOG -->
<div id="dlg">
 <div id="dlgb"></div>
 <div class="abs" style="left:0;top:24px;width:614px;height:1px;background:#dcdcdc"></div>
 <div class="abs" style="left:6px;top:11px;width:8px;height:2px;background:#787878"></div>
 <div class="abs" style="left:28px;top:5px;font-size:12.8px;line-height:15px;color:#3a3a3a;transform:scaleX(0.84);transform-origin:0 0">POSAGE : POSAGE1</div>
 <!-- tabs -->
 <div class="abs" style="left:79px;top:52px;width:534px;height:2px;background:#cdcdcd"></div>
 <div class="abs" style="left:1px;top:27px;width:79px;height:27px;border:1px solid #c8c8c8;border-bottom:none;background:#f5f5f5"></div>
 <div class="abs" style="left:141px;top:27px;width:1px;height:23px;background:#d2d2d2"></div>
 <div class="abs" style="left:245px;top:27px;width:1px;height:23px;background:#d2d2d2"></div>
 <div class="lbl" style="left:30px;top:32px">Posage</div>
 <div class="lbl" style="left:108px;top:32px">Brut</div>
 <div class="lbl" style="left:170px;top:32px">Post-traiter</div>
 <!-- Machine -->
 <div class="tri" style="left:10px;top:66px"></div>
 <div class="hdr" style="left:25px;top:63px">Machine</div>
 <div class="lbl" style="left:15px;top:97px">Machine</div>
 <div class="btn" style="left:213px;top:89px;width:90px;height:28px"></div>
 <div class="lbl" style="left:223px;top:97px">Sélectionner...</div>
 <div class="hl" style="left:2px;top:132px;width:598px"></div>
 <!-- Posage -->
 <div class="tri" style="left:10px;top:149px"></div>
 <div class="hdr" style="left:25px;top:146px">Posage</div>
 <div class="lbl" style="left:13px;top:176px">Type d'opération</div>
 <div class="sel" style="left:120px;top:169px;width:462px;height:27px"></div>
 <div class="lbl" style="left:145px;top:176px">Coupe</div>
 <div class="hl" style="left:2px;top:202px;width:598px"></div>
 <!-- WCS -->
 <div class="tri" style="left:10px;top:219px"></div>
 <div class="hdr" style="left:26px;top:216px">Système d'axes de travail (WCS)</div>
 <div class="lbl" style="left:13px;top:246px">Orientation</div>
 <div class="sel" style="left:120px;top:238px;width:462px;height:27px"></div>
 <div class="lbl" style="left:145px;top:246px">Orientation du modèle</div>
 <div class="lbl" style="left:13px;top:276px">Origine</div>
 <div class="sel" style="left:120px;top:268px;width:462px;height:27px"></div>
 <div class="lbl" style="left:145px;top:276px">Point sur le brut</div>
 <div class="lbl" style="left:13px;top:306px">Point sur brut</div>
 <div class="abs" style="left:121px;top:298px;width:103px;height:28px;border:2px solid #5ab6e8;border-radius:2px;background:#deedf7"></div>
 <div class="lbl" style="left:143px;top:306px">Point de bloc</div>
 <div class="hl" style="left:2px;top:332px;width:598px"></div>
 <!-- Modele -->
 <div class="tri" style="left:10px;top:349px"></div>
 <div class="hdr" style="left:25px;top:346px">Modèle</div>
 <div class="lbl" style="left:13px;top:376px">Modèle</div>
 <div class="btn" style="left:121px;top:368px;width:61px;height:28px"></div>
 <div class="lbl" style="left:143px;top:376px">Corps</div>
 <div class="hl" style="left:0;top:398px;width:612px"></div>
 <div class="btn" style="left:472px;top:405px;width:43px;height:24px;border-color:#b4b4b4;border-radius:3px"></div>
 <div class="abs" style="left:485px;top:409px;font-size:13px;line-height:15px;color:#333">OK</div>
 <div class="btn" style="left:529px;top:405px;width:71px;height:24px;border-color:#b4b4b4;border-radius:3px"></div>
 <div class="abs" style="left:542px;top:409px;font-size:13px;line-height:15px;color:#333">Annuler</div>
 <svg class="abs" style="left:0;top:0" width="614" height="435" viewBox="1237 362 614 435">
  <!-- posage tab icon -->
  <path d="M1245.2,409.6 V401.8 L1247.8,399.2 H1255.4 V407 L1252.8,409.6 Z" fill="#dadada" stroke="#555" stroke-width="1"/>
  <path d="M1245.2,401.8 H1252.8 V409.6 M1252.8,401.8 L1255.4,399.2" fill="none" stroke="#555" stroke-width=".9"/>
  <path d="M1250.2,404.5 V396.8 L1252.8,394.2 H1261 V401.9 L1258.4,404.5 Z" fill="#6ab4e8"/>
  <path d="M1258.4,404.5 V396.8 L1261,394.2 V401.9 Z" fill="#3f8fd0"/>
  <path d="M1250.2,396.8 L1252.8,394.2 H1261 L1258.4,396.8 Z" fill="#8ccaf2"/>
  <!-- brut icon -->
  <path d="M1324.3,408.6 V398.5 L1327.8,395.2 H1338 V405.2 L1334.5,408.6 Z" fill="#dfc678" stroke="#b09850" stroke-width=".8"/>
  <path d="M1334.5,408.6 V398.5 L1338,395.2 V405.2 Z" fill="#c6a850"/>
  <path d="M1324.3,398.5 L1327.8,395.2 H1338 L1334.5,398.5 Z" fill="#ead490"/>
  <!-- post icon -->
  <rect x="1385.3" y="394.4" width="15.4" height="15.1" fill="#fff" stroke="#555" stroke-width="1"/>
  <rect x="1385.3" y="394.4" width="15.4" height="2.2" fill="#555"/>
  <text x="1393" y="402.2" text-anchor="middle" font-family="Liberation Sans" font-weight="bold" font-size="5" fill="#3a9ae8">G1</text>
  <text x="1393" y="407.6" text-anchor="middle" font-family="Liberation Sans" font-weight="bold" font-size="5" fill="#3a9ae8">G2</text>
  <!-- coupe select icon -->
  <path d="M1365.3,536.5 H1373.6 V541.6 L1370.8,545 H1368.1 L1365.3,541.6 Z" fill="#fff" stroke="#555" stroke-width="1"/>
  <rect x="1366" y="539.5" width="7" height="2" fill="#ddd"/>
  <path d="M1369.45,545 V551.8" stroke="#555" stroke-width="1"/>
  <path d="M1362,551.6 H1377 M1367.2,549.2 V551.6 M1371.7,549.2 V551.6" stroke="#1a8ae6" stroke-width="1"/>
  <path d="M1805,541.5 H1811 L1808,545.5 Z M1805,611.5 H1811 L1808,615.5 Z M1805,641.5 H1811 L1808,645.5 Z" fill="#666"/>
  <!-- orientation icon -->
  <path d="M1363.5,620.4 V608.5 L1365,607.2 H1370.2 V614.3 H1376.5 V619 L1375,620.4 Z" fill="#dcdcdc" stroke="#666" stroke-width="1"/>
  <path d="M1363.5,614.3 H1370.2 V620.4" fill="none" stroke="#666" stroke-width="1"/>
  <!-- origine icon -->
  <path d="M1363.5,650.5 V639.5 L1366,637.2 H1376.5 V648 L1374,650.5 Z" fill="#dcc070" stroke="#b89a50" stroke-width=".8"/>
  <path d="M1374,650.5 V640 L1376.5,637.5 V648 Z" fill="#c4a54e"/>
  <circle cx="1372.6" cy="641.3" r="2" fill="#fff"/>
  <circle cx="1372.6" cy="641.3" r="1.1" fill="#1a8ae6"/>
  <!-- cursors -->
  <path d="M1366.4,666.6 V679 L1369.3,676.5 L1371,681.2 L1373,680.3 L1371.3,675.5 H1375.3 Z" fill="#fff" stroke="#555" stroke-width="1" stroke-linejoin="round"/>
  <path d="M1366.4,736.6 V749 L1369.3,746.5 L1371,751.2 L1373,750.3 L1371.3,745.5 H1375.3 Z" fill="#fff" stroke="#555" stroke-width="1" stroke-linejoin="round"/>
  <!-- x -->
  <path d="M1430.3,740.3 L1437,747 M1437,740.3 L1430.3,747" stroke="#666" stroke-width="1.1"/>
  <!-- triangles handled in html; info icon -->
  <circle cx="1252" cy="779" r="7" fill="#8a8a8a"/>
  <rect x="1251" y="777.5" width="2.2" height="5.5" fill="#fff"/>
  <rect x="1251" y="774.3" width="2.2" height="2" fill="#fff"/>
 </svg>
</div>

</body></html>
